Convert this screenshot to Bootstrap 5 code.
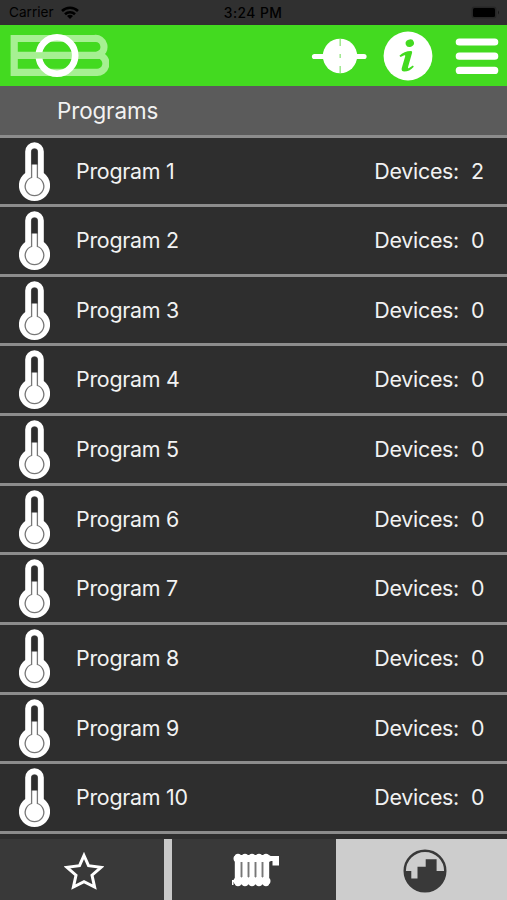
<!DOCTYPE html>
<html lang="en">
<head>
<meta charset="utf-8">
<meta name="viewport" content="width=device-width, initial-scale=1">
<title>Programs</title>
<link href="https://cdn.jsdelivr.net/npm/bootstrap@5.3.0/dist/css/bootstrap.min.css" rel="stylesheet">
<style>
body{font-family:Inter,"Liberation Sans",sans-serif;background:#2e2e2e;color:#f2f2f2}
.app{height:900px;background:#393939}
.status{height:25px;background:#303030;color:#000;font-size:13.6px;line-height:27px;padding:0 6px 0 9px}
.status>*{flex:1 1 0}
.clock{font-weight:500;font-size:13.8px;letter-spacing:.45px;padding-right:4px}
.topbar{height:61px;background:#43da20;padding:0 8px 0 10px}
.heading{height:51.5px;background:#5b5b5b;border-bottom:3px solid #8c8c8c;padding:0 0 0 57px;font-size:22.4px;line-height:49px;letter-spacing:-.1px;margin:0;font-weight:400}
.programs{overflow:hidden;height:701.5px;background:#2e2e2e}
.program{height:69.65px;border-bottom:3px solid #8c8c8c;font-size:21.4px;line-height:66px;letter-spacing:-.27px;padding:0 23px 0 19px}
.program svg{width:31px;height:60px;margin:4px 26px 0 0}
.program .count{width:13px;margin-left:12px;text-align:center}
.tabs{height:61px;background:#393939}
.tab-star{width:164px}.tab-heat{width:164px}
.divider{width:8px;background:#c9c9c9}
.tab-prog{background:#cdcdcd}
</style>
<script src="https://cdn.jsdelivr.net/npm/bootstrap@5.3.0/dist/js/bootstrap.bundle.min.js"></script>
</head>
<body class="overflow-hidden">
<svg class="d-none">
<symbol id="thermo" viewBox="0 0 31 60">
<path d="M6.2 31V9.5a9.3 9.3 0 0 1 18.6 0V31A15.6 15.6 0 1 1 6.2 31Z" fill="#fff"/>
<path d="M12.6 35.5V9.8a2.9 2.9 0 0 1 5.8 0V35.5A9.3 9.3 0 1 1 12.6 35.5Z" fill="#fff" stroke="#777" stroke-width="1.3"/>
<path d="M12.4 22.6V9.8a3.1 3.1 0 0 1 6.2 0V22.6Z" fill="#2e2e2e"/>
</symbol>
</svg>
<div class="app d-flex flex-column">
<div class="status d-flex flex-shrink-0">
<div class="d-flex align-items-center"><span>Carrier</span>
<svg style="margin-left:7px" width="18" height="13" viewBox="0 0 18 13" fill="none" stroke="#000" stroke-width="2.6"><path d="M1 5a11.6 11.6 0 0 1 16 0M4 8.2a7.3 7.3 0 0 1 10 0"/><path d="M9 13 6 10a4.2 4.2 0 0 1 6 0Z" fill="#000" stroke="none"/></svg></div>
<div class="clock text-center">3:24 PM</div>
<div class="d-flex align-items-center justify-content-end"><svg width="30" height="13" viewBox="0 0 30 13"><rect x=".5" y=".5" width="25" height="12" rx="3" fill="#262626"/><rect x="2" y="2" width="22" height="9" rx="1.5"/><path d="M27 4.5q2 2 0 4" fill="#161616"/></svg></div>
</div>
<header class="topbar d-flex align-items-center flex-shrink-0">
<svg class="me-auto" width="99" height="44" viewBox="0 0 99 44" fill="none">
<path d="M47 4.5H4.2V38.3H47M4 21.4H91M47 4.5H84.5a8.4 8.4 0 0 1 4 16.2a8.9 8.9 0 0 1-3 17.6H47" stroke="#a6f092" stroke-width="7.2"/>
<circle cx="47" cy="21.5" r="18.2" stroke="#fff" stroke-width="6.6"/>
<path d="M24 21.4H34" stroke="#a6f092" stroke-width="6.4"/>
</svg>
<svg width="56" height="38" viewBox="0 0 56 38"><path d="M3.5 19.5H53" stroke="#fff" stroke-width="5.2" stroke-linecap="round"/><circle cx="29" cy="19" r="17.2" fill="#fff"/><path d="M29.2 2V9M29.2 17V21M29.2 29V36" stroke="#9ee88c" stroke-width="1.5"/></svg>
<svg class="ms-3" width="50" height="50" viewBox="0 0 50 50"><circle cx="25" cy="25" r="24.4" fill="#fff"/><g fill="#43da20"><ellipse cx="26.8" cy="12.2" rx="4.2" ry="3.7" transform="rotate(-20 26.8 12.2)"/><path d="M16.4 24.8Q21 20.2 28 20q1.5.1 1.1 1.8L25 36.3q-.1 1.3 1.1.7l3.8-2.5.9 1.2q-4.4 4.8-9.6 4.9-3.1-.2-2.5-3.3l3.5-12.1q.3-1.2-.9-.9l-3.7 1.8Z"/></g></svg>
<svg style="margin-left:22px" width="44" height="38" viewBox="0 0 44 38"><path d="M4.3 5H39.7M4.3 19.2H39.7M4.3 33.4H39.7" stroke="#fff" stroke-width="7.2" stroke-linecap="round"/></svg>
</header>
<h1 class="heading flex-shrink-0">Programs</h1>
<main class="programs flex-shrink-0">
<div class="program d-flex"><svg><use href="#thermo"/></svg><span>Program 1</span><span class="ms-auto">Devices:</span><span class="count">2</span></div>
<div class="program d-flex"><svg><use href="#thermo"/></svg><span>Program 2</span><span class="ms-auto">Devices:</span><span class="count">0</span></div>
<div class="program d-flex"><svg><use href="#thermo"/></svg><span>Program 3</span><span class="ms-auto">Devices:</span><span class="count">0</span></div>
<div class="program d-flex"><svg><use href="#thermo"/></svg><span>Program 4</span><span class="ms-auto">Devices:</span><span class="count">0</span></div>
<div class="program d-flex"><svg><use href="#thermo"/></svg><span>Program 5</span><span class="ms-auto">Devices:</span><span class="count">0</span></div>
<div class="program d-flex"><svg><use href="#thermo"/></svg><span>Program 6</span><span class="ms-auto">Devices:</span><span class="count">0</span></div>
<div class="program d-flex"><svg><use href="#thermo"/></svg><span>Program 7</span><span class="ms-auto">Devices:</span><span class="count">0</span></div>
<div class="program d-flex"><svg><use href="#thermo"/></svg><span>Program 8</span><span class="ms-auto">Devices:</span><span class="count">0</span></div>
<div class="program d-flex"><svg><use href="#thermo"/></svg><span>Program 9</span><span class="ms-auto">Devices:</span><span class="count">0</span></div>
<div class="program d-flex"><svg><use href="#thermo"/></svg><span>Program 10</span><span class="ms-auto">Devices:</span><span class="count">0</span></div>
</main>
<nav class="tabs d-flex flex-shrink-0">
<div class="tab-star d-flex align-items-center justify-content-center"><svg width="40" height="40" viewBox="0 0 40 40" style="margin:3px 0 0 3px"><path d="M20 4.5 24.5 14.7 37 16.3 28 24.2 30.6 36 20 30.6 9.4 36 12 24.2 3 16.3 15.5 14.7Z" fill="none" stroke="#fff" stroke-width="3"/></svg></div>
<div class="divider"></div>
<div class="tab-heat d-flex align-items-center justify-content-center"><svg width="50" height="36" viewBox="0 0 50 36" style="margin-left:4px"><g stroke="#fff" stroke-linecap="round" fill="none"><path d="M7 5V31M14 5V31M21 5V31M28 5V31M35 5V31" stroke-width="6.4"/><path d="M6 6.5H37M6 29H36" stroke-width="7"/></g><path d="M36 4H48V13.5H41.5V9H36ZM5 28H1V33H2.5V30H5Z" fill="#fff"/><path d="M10.5 10V25M17.5 10V25M24.5 10V25M31.5 10V25" stroke="#777" stroke-width="1.9"/></svg></div>
<div class="tab-prog flex-fill d-flex align-items-center justify-content-center"><svg width="44" height="44" viewBox="0 0 44 44" style="margin:2px 0 0 7px"><circle cx="22" cy="22" r="20.3" fill="none" stroke="#393939" stroke-width="2.4"/><path d="M1 22H8.3V29.5H14.5V17.7H22.7V10.3H33.6V22H43A21 21 0 0 1 1 22Z" fill="#393939"/></svg></div>
</nav>
</div>
</body>
</html>
